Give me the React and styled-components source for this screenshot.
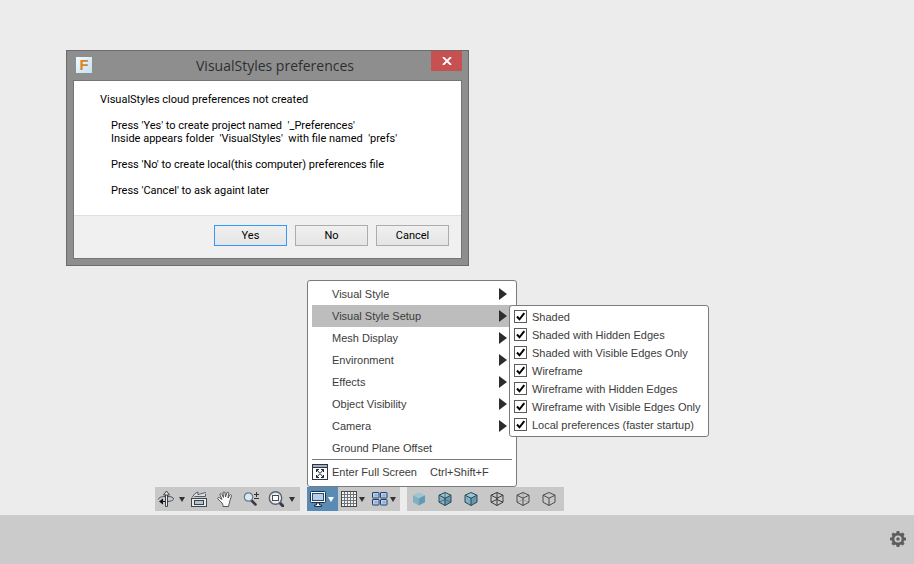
import React from "react";
import styled, { createGlobalStyle, css } from "styled-components";

const menuItems = [
  { label: "Visual Style", sub: true },
  { label: "Visual Style Setup", sub: true, open: true },
  { label: "Mesh Display", sub: true },
  { label: "Environment", sub: true },
  { label: "Effects", sub: true },
  { label: "Object Visibility", sub: true },
  { label: "Camera", sub: true },
  { label: "Ground Plane Offset" },
];

const styleOptions = [
  "Shaded",
  "Shaded with Hidden Edges",
  "Shaded with Visible Edges Only",
  "Wireframe",
  "Wireframe with Hidden Edges",
  "Wireframe with Visible Edges Only",
  "Local preferences (faster startup)",
];

const Icon = ({ children }) => (
  <svg width="16" height="16" viewBox="0 0 16 16" fill="none" aria-hidden="true">
    {children}
  </svg>
);

const Caret = () => (
  <svg width="6" height="5" viewBox="0 0 6 5" aria-hidden="true">
    <path d="M0 0h6L3 5z" fill="currentColor" />
  </svg>
);

const OrbitIcon = () => (
  <Icon>
    <path d="M10 5.500c3.500 0 5.500 1 5.500 2.500 0 1.600-3 2.500-7.500 2.500H4" stroke="#4a5056" />
    <path d="M7 5.500c-3.500 0-6.500 1-6.500 3" stroke="#4a5056" />
    <path d="M7.500 15.500V3.500h2v12z" fill="#e9ecee" stroke="#3f454b" />
    <path d="M8.500 0l3 4h-6z" fill="#e9ecee" stroke="#3b4147" />
    <path d="M1 10.500l4-3v6z" fill="#111" />
    <path d="M4 10.500h3" stroke="#111" />
  </Icon>
);

const LookIcon = () => (
  <Icon>
    <path d="M1 6.500L4 2h10.500v3.500H3.500" fill="#dde1e4" />
    <path d="M1 6.500L4 2.500M4 2.500L7 1v3M7 3.500L15 1.500M3.500 5.500h11V3" stroke="#555c63" />
    <rect x="0.5" y="7.500" width="15" height="8" fill="#e6e9ec" stroke="#3f464e" />
    <rect x="3.500" y="9.500" width="9" height="4" fill="#b3c3d2" stroke="#3a4148" />
  </Icon>
);

const HandIcon = () => (
  <Icon>
    <path
      d="M5 12L1 8c-1-1.500 1-2 2-1l2 1.500L3 4c-.5-1.500 1.300-2 1.800-.7L6.500 6.500 6 2c0-1.600 1.900-1.600 2 0l.5 4L9.800 2c.4-1.500 2.200-1 1.800.5L11 7l1.700-2.800c.8-1.200 2.200-.4 1.700.9L13 9.500c-.5 2.500-1 3-1.500 6H6c0-1.500 0-2-1-3.500z"
      fill="#fafafa"
      stroke="#50565c"
    />
  </Icon>
);

const ZoomIcon = () => (
  <Icon>
    <path d="M8.500 9.500l4 4" stroke="#353b42" strokeWidth="2.500" strokeLinecap="round" />
    <circle cx="5.500" cy="6" r="4.200" fill="#d9e9f5" stroke="#6c7884" strokeWidth="1.200" />
    <path d="M11 3.500h5M13.500 1v5M11 7.500h5" stroke="#333" />
  </Icon>
);

const FitIcon = () => (
  <Icon>
    <path d="M11.500 11.500l3.500 3.500" stroke="#353b42" strokeWidth="3" strokeLinecap="round" />
    <circle cx="7.500" cy="7" r="6.200" fill="#e8eef3" stroke="#59626b" strokeWidth="1.400" />
    <rect x="4.500" y="4.500" width="6" height="5" fill="#fff" stroke="#454c54" />
  </Icon>
);

const DisplayIcon = () => (
  <Icon>
    <rect x="0.5" y="0.5" width="15" height="11" rx="1" fill="#fff" stroke="#1e3145" />
    <rect x="2.500" y="2.500" width="11" height="7" fill="#b4d0ee" stroke="#2d4a6b" />
    <path d="M6.500 12v2h-2v1.500h7V14h-2v-2z" fill="#fff" stroke="#1e3145" />
  </Icon>
);

const GridIcon = () => (
  <Icon>
    <rect x="0.5" y="0.5" width="15" height="15" fill="#f3f3f3" stroke="#44494e" />
    <path
      d="M3.500 1v14M6.500 1v14M9.500 1v14M12.500 1v14M1 3.500h14M1 6.500h14M1 9.500h14M1 12.500h14"
      stroke="#6e7478"
    />
  </Icon>
);

const PanesIcon = () => (
  <Icon>
    {[
      [0.5, 1.5],
      [8.5, 1.5],
      [0.5, 8.5],
      [8.5, 8.5],
    ].map(([x, y]) => (
      <g key={`${x}-${y}`}>
        <rect x={x} y={y} width="6.5" height="5.5" rx="0.5" fill="#b7d1ee" stroke="#253e66" />
        <rect x={x + 2} y={y + 1.5} width="3" height="2.5" fill="#8db1dc" />
      </g>
    ))}
  </Icon>
);

const FullScreenIcon = () => (
  <Icon>
    <rect x="0.5" y="0.5" width="15" height="15" fill="#fff" stroke="#2c3540" />
    <path d="M1 1h14v2H1z" fill="#a5b0bb" />
    <path d="M1 3.500h14" stroke="#2c3540" />
    <path
      d="M4.500 8V5.500H7M9 5.500h2.500V8M11.500 11v2.500H9M7 13.500H4.500V11M4.500 5.500l7 8M11.500 5.500l-7 8"
      stroke="#1b232c"
    />
    <path d="M7.500 9h1v1h-1z" fill="#fff" />
  </Icon>
);

const outline = "M8 1.500l6 2.700v7L8 14.500l-6-3.300v-7z";
const frontEdges = "M2 4.200l6 3 6-3M8 7.200v7.300";
const backEdges = "M8 1.500v7M2 11.200l6-2.700 6 2.700";

// filled cubes have tinted faces, "edges" and "hidden" are the stroke colours
const CubeIcon = ({ filled, edges, hidden }) => (
  <Icon>
    {filled && (
      <>
        <path d="M8 1.500l6 2.700-6 3-6-3z" fill="#9cc5d6" />
        <path d="M2 4.200l6 3v7.300l-6-3.300z" fill="#7fb0c4" />
        <path d="M14 4.200l-6 3v7.300l6-3.300z" fill="#659bb2" />
      </>
    )}
    {hidden && <path d={backEdges} stroke={hidden} />}
    {edges && <path d={`${outline}${frontEdges}`} stroke={edges} strokeLinejoin="round" />}
  </Icon>
);

const GearIcon = () => (
  <Icon>
    {[0, 45, 90, 135].map((angle) => (
      <path
        key={angle}
        d="M6 3L6.700 0h2.600L10 3v10l-.7 3H6.700L6 13z"
        fill="#5e5e5e"
        transform={`rotate(${angle} 8 8)`}
      />
    ))}
    <circle cx="8" cy="8" r="6.200" fill="#5e5e5e" />
    <circle cx="8" cy="8" r="3.600" fill="#cbcbcb" />
    <circle cx="8" cy="8" r="1.800" fill="#5e5e5e" />
  </Icon>
);

const PreferencesDialog = () => (
  <Dialog role="dialog" aria-labelledby="dialog-title">
    <TitleBar>
      <AppLogo>F</AppLogo>
      <Title id="dialog-title">VisualStyles preferences</Title>
      <CloseButton aria-label="Close">
        <svg width="10" height="8" viewBox="0 0 10 8" aria-hidden="true">
          <path d="M1 0l8 8M9 0L1 8" stroke="#fff" strokeWidth="1.800" />
        </svg>
      </CloseButton>
    </TitleBar>
    <Client>
      <Message>
        <p>VisualStyles cloud preferences not created</p>
        <Indented>
          {"Press 'Yes' to create project named  '_Preferences'\nInside appears folder  'VisualStyles'  with file named  'prefs'"}
        </Indented>
        <Indented>Press 'No' to create local(this computer) preferences file</Indented>
        <Indented>Press 'Cancel' to ask againt later</Indented>
      </Message>
      <Actions>
        <DialogButton $primary>Yes</DialogButton>
        <DialogButton>No</DialogButton>
        <DialogButton>Cancel</DialogButton>
      </Actions>
    </Client>
  </Dialog>
);

const DisplayMenu = () => (
  <Menu>
    {menuItems.map((item) => (
      <MenuRow key={item.label}>
        <MenuButton $active={item.open}>
          {item.label}
          {item.sub && (
            <svg width="8" height="12" viewBox="0 0 8 12" aria-hidden="true">
              <path d="M0 0l8 6-8 6z" fill="#2d2d2d" />
            </svg>
          )}
        </MenuButton>
        {item.open && (
          <SubMenu>
            {styleOptions.map((option) => (
              <Option key={option}>
                <Checkbox type="checkbox" defaultChecked />
                {option}
              </Option>
            ))}
          </SubMenu>
        )}
      </MenuRow>
    ))}
    <Separator />
    <MenuRow>
      <FullScreenButton>
        <FullScreenIcon />
        <span>Enter Full Screen</span>
        <span>Ctrl+Shift+F</span>
      </FullScreenButton>
    </MenuRow>
  </Menu>
);

const App = () => {
  return (
    <Page>
      <GlobalStyle />
      <Canvas>
        <PreferencesDialog />
      </Canvas>
      <NavBar>
        <Group $end={3}>
          <DropTool $wide aria-label="Orbit">
            <OrbitIcon />
            <Caret />
          </DropTool>
          <Tool aria-label="Look at">
            <LookIcon />
          </Tool>
          <Tool aria-label="Pan">
            <HandIcon />
          </Tool>
          <Tool aria-label="Zoom">
            <ZoomIcon />
          </Tool>
          <DropTool $wide aria-label="Fit">
            <FitIcon />
            <Caret />
          </DropTool>
        </Group>
        <Group>
          <Anchor>
            <DropTool $active aria-label="Display settings">
              <DisplayIcon />
              <Caret />
            </DropTool>
            <DisplayMenu />
          </Anchor>
          <DropTool aria-label="Grid and snaps">
            <GridIcon />
            <Caret />
          </DropTool>
          <DropTool aria-label="Viewports">
            <PanesIcon />
            <Caret />
          </DropTool>
        </Group>
        <Group $end={1}>
          <Tool aria-label="Shaded">
            <CubeIcon filled />
          </Tool>
          <Tool aria-label="Shaded with hidden edges">
            <CubeIcon filled edges="#2f4752" hidden="#4a7080" />
          </Tool>
          <Tool aria-label="Shaded with visible edges only">
            <CubeIcon filled edges="#2f4752" />
          </Tool>
          <Tool aria-label="Wireframe">
            <CubeIcon edges="#3c3c3c" hidden="#3c3c3c" />
          </Tool>
          <Tool aria-label="Wireframe with hidden edges">
            <CubeIcon edges="#4a4a4a" hidden="#a2a2a2" />
          </Tool>
          <Tool aria-label="Wireframe with visible edges only">
            <CubeIcon edges="#4a4a4a" />
          </Tool>
        </Group>
      </NavBar>
      <Timeline>
        <SettingsButton aria-label="Settings">
          <GearIcon />
        </SettingsButton>
      </Timeline>
    </Page>
  );
};

export default App;

const GlobalStyle = createGlobalStyle`
  * {
    box-sizing: border-box;
  }
  body {
    margin: 0;
    background: #ececec;
  }
  button {
    margin: 0;
    padding: 0;
    border: none;
    background: none;
    font: inherit;
    color: inherit;
  }
  p, ul, h1 {
    margin: 0;
    padding: 0;
  }
  svg {
    display: block;
    flex: none;
  }
`;

const Page = styled.div`
  display: flex;
  flex-direction: column;
  min-height: 100vh;
  font-family: "Liberation Sans", Arial, sans-serif;
  font-size: 11px;
  color: #3c3c3c;
`;

const Canvas = styled.main`
  position: relative;
  flex: 1;
`;

const Dialog = styled.section`
  position: absolute;
  top: 50px;
  left: 66px;
  width: 403px;
  padding: 0 6px 6px;
  border: 1px solid #6b6b6b;
  background: #8e8e8e;
  font-family: Roboto, Tahoma, sans-serif;
  color: #000;
`;

const TitleBar = styled.header`
  display: flex;
  align-items: flex-start;
  height: 29px;
  padding-left: 3px;
`;

const AppLogo = styled.span`
  width: 16px;
  height: 16px;
  margin-top: 6px;
  background: linear-gradient(135deg, #f4fafd, #bfe2f2);
  color: #dd8427;
  font: bold 15px/16px "Liberation Sans", sans-serif;
  text-align: center;
`;

const Title = styled.h1`
  flex: 1;
  padding-left: 27px;
  font: 400 14px/29px "Open Sans", "Segoe UI", sans-serif;
  color: #2e2e2e;
  text-align: center;
`;

const CloseButton = styled.button`
  display: flex;
  align-items: center;
  justify-content: center;
  width: 31px;
  height: 20px;
  background: #c75050;
`;

const Client = styled.div`
  border: 1px solid #757575;
  background: #fff;
`;

const Message = styled.div`
  display: flex;
  flex-direction: column;
  gap: 13px;
  padding: 12px 26px 18px;
  font-size: 11px;
  line-height: 13px;
`;

const Indented = styled.p`
  padding-left: 11px;
  white-space: pre;
`;

const Actions = styled.footer`
  display: flex;
  justify-content: flex-end;
  gap: 8px;
  padding: 9px 12px 12px;
  border-top: 1px solid #dfdfdf;
  background: #f0f0f0;
`;

const DialogButton = styled.button`
  width: 73px;
  height: 21px;
  border: 1px solid ${({ $primary }) => ($primary ? "#3399ff" : "#acacac")};
  background: linear-gradient(#f0f0f0, #e5e5e5);
  font-size: 11px;
`;

const NavBar = styled.nav`
  display: flex;
  gap: 7px;
  padding: 0 0 4px 155px;
`;

const Group = styled.div`
  display: flex;
  height: 24px;
  padding-right: ${({ $end = 0 }) => $end}px;
  background: #c8c8c8;
`;

const Tool = styled.button`
  display: flex;
  align-items: center;
  width: 26px;
  height: 24px;
  padding-left: 4px;
  color: #333;
`;

const DropTool = styled(Tool)`
  gap: ${({ $wide }) => ($wide ? 5 : 2)}px;
  width: ${({ $wide }) => ($wide ? 32 : 31)}px;
  padding-left: 3px;
  ${({ $active }) =>
    $active &&
    css`
      background: #5a8bb5;
      color: #fff;
    `}
`;

const Anchor = styled.div`
  position: relative;
`;

const popup = css`
  position: absolute;
  border: 1px solid #7b7b7b;
  border-radius: 3px;
  background: #fff;
`;

const Menu = styled.ul`
  ${popup}
  bottom: 100%;
  left: 0;
  width: 210px;
  padding: 2px 4px;
  list-style: none;
`;

const MenuRow = styled.li`
  position: relative;
`;

const MenuButton = styled.button`
  display: flex;
  align-items: center;
  justify-content: space-between;
  width: 100%;
  height: 22px;
  padding: 0 5px 0 20px;
  background: ${({ $active }) => ($active ? "#bdbdbd" : "none")};
`;

const FullScreenButton = styled.button`
  display: grid;
  grid-template-columns: 20px 98px auto;
  align-items: center;
  width: 100%;
  height: 24px;
  text-align: left;
`;

const Separator = styled.li`
  height: 1px;
  background: #7b7b7b;
`;

const SubMenu = styled.div`
  ${popup}
  top: 0;
  left: calc(100% - 3px);
  width: 200px;
  padding: 2px 4px;
  color: #3c3c3c;
`;

const Option = styled.label`
  display: flex;
  align-items: center;
  gap: 5px;
  height: 18px;
  white-space: nowrap;
`;

const Checkbox = styled.input`
  appearance: none;
  width: 13px;
  height: 13px;
  margin: 0 0 1px;
  border: 1px solid #5c5c5c;
  background: #fff;

  &:checked {
    background: #fff
      url("data:image/svg+xml,%3Csvg xmlns='http://www.w3.org/2000/svg' viewBox='0 0 11 11'%3E%3Cpath d='M2 5.500l2.500 2.800L9.300 2.200' fill='none' stroke='%23000' stroke-width='2'/%3E%3C/svg%3E")
      center / 11px 11px no-repeat;
  }
`;

const Timeline = styled.footer`
  display: flex;
  align-items: center;
  justify-content: flex-end;
  height: 49px;
  padding: 0 8px 2px 0;
  background: #cbcbcb;
`;

const SettingsButton = styled.button`
  display: flex;
`;
